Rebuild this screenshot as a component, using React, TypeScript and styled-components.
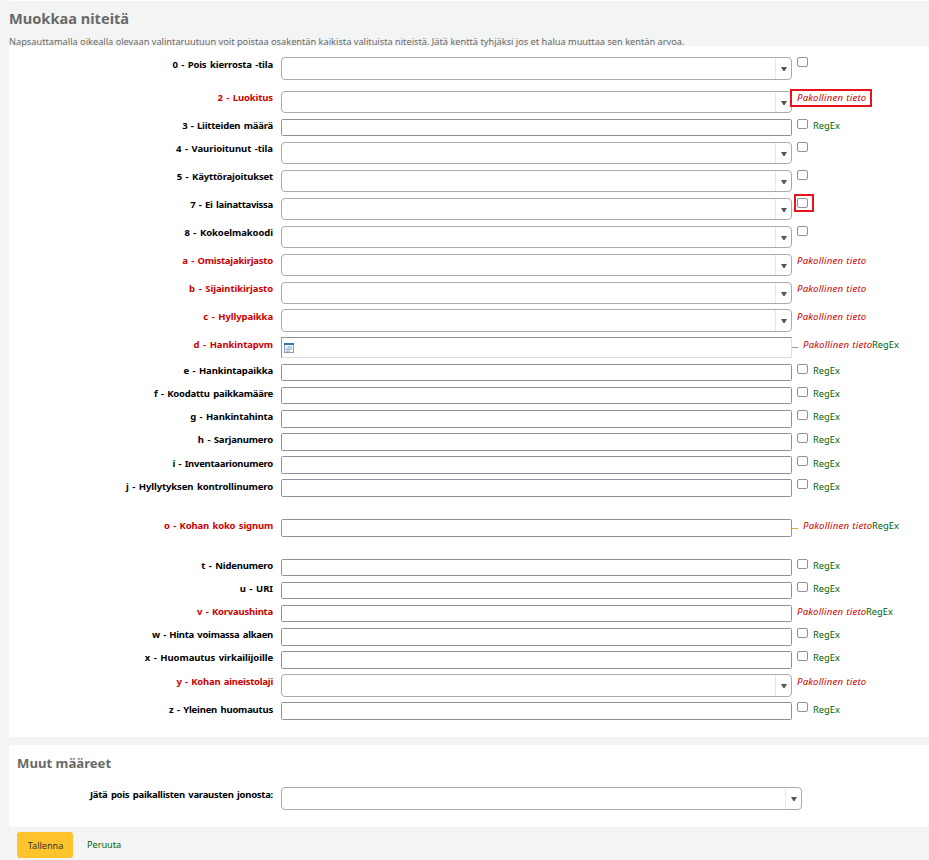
import React from 'react';
import styled, { createGlobalStyle } from 'styled-components';

const GlobalStyle = createGlobalStyle`
  *, *::before, *::after { box-sizing: border-box; }
  body {
    margin: 0;
    background: #f3f4f4;
    color: #000;
    font: 9.3px/12px "Noto Sans", "Open Sans", sans-serif;
  }
`;

const Page = styled.main`
  display: flex;
  flex-direction: column;
  height: 860px;
  padding-left: 9px;
  overflow: hidden;
`;

const TopEdge = styled.div`
  flex: none;
  height: 1px;
  background: #fff;
`;

const Header = styled.header`
  flex: none;
  height: 45px;
  padding-top: 7px;
  color: #696969;
  z-index: 1;
`;

const Title = styled.h1`
  margin: 0;
  font-size: 14.6px;
  line-height: 20px;
  font-weight: 700;
`;

const Intro = styled.p`
  margin: 8px 0 0;
  font-size: 9.22px;
  line-height: 12px;
  white-space: nowrap;
`;

const Panel = styled.section<{ $height: number; $top: number }>`
  flex: none;
  height: ${(p) => p.$height}px;
  padding-top: ${(p) => p.$top}px;
  background: #fff;
`;

const PanelTitle = styled.h2`
  margin: 0 0 14px 8px;
  font-size: 13.15px;
  line-height: 20px;
  font-weight: 700;
  color: #696969;
`;

const Gap = styled.div`
  flex: none;
  height: 8px;
`;

const Row = styled.div<{ $pitch: number }>`
  display: flex;
  align-items: flex-start;
  height: ${(p) => p.$pitch}px;
`;

const Label = styled.label<{ $required?: boolean; $drop: number; $tracking: number }>`
  flex: none;
  width: 264px;
  margin-right: 8px;
  padding-top: ${(p) => p.$drop - 6}px;
  font-size: 9.5px;
  font-weight: 700;
  letter-spacing: ${(p) => p.$tracking}px;
  word-spacing: 1.2px;
  text-align: right;
  white-space: nowrap;
  color: ${(p) => (p.$required ? '#c00' : '#000')};
`;

const TextInput = styled.input<{ $height: number }>`
  flex: none;
  width: 511px;
  height: ${(p) => p.$height}px;
  margin: 0;
  padding: 0 4px;
  border: 1px solid #8f8f9d;
  border-radius: 1.5px;
  background: #fff;
  font: inherit;
  outline: 0;
`;

const SelectBox = styled.div<{ $width: number; $height: number }>`
  flex: none;
  display: flex;
  justify-content: flex-end;
  width: ${(p) => p.$width}px;
  height: ${(p) => p.$height}px;
  border: 1px solid #aaa;
  border-radius: 4px;
  background: #fff;
`;

const SelectArrow = styled.span`
  display: flex;
  align-items: flex-start;
  justify-content: center;
  width: 16px;
  padding-top: 9px;
  border-left: 1px solid #e8e8e8;
`;

const DateBox = styled.div`
  flex: none;
  width: 511px;
  height: 21px;
  padding: 5px 0 0 2px;
  border: 1px solid #ddd;
  border-top-color: #8f8f8f;
  border-left-color: #999;
  background: #fff;
`;

const Tail = styled.div<{ $drop: number }>`
  display: flex;
  flex: none;
  align-items: flex-start;
  margin-left: 5px;
  line-height: 12px;
  padding-top: ${(p) => p.$drop - 6}px;
`;

const Check = styled.input<{ $drop: number }>`
  appearance: none;
  flex: none;
  width: 11px;
  height: 10px;
  margin: ${(p) => 6 - p.$drop}px 5px 0 0;
  border: 1px solid #8f8f9d;
  border-radius: 2px;
  background: #fff;
`;

const Required = styled.span`
  width: 69px;
  flex: none;
  font-size: 9.6px;
  letter-spacing: 0.2px;
  word-spacing: 0.5px;
  font-style: italic;
  white-space: nowrap;
  color: #c00;
`;

const RegEx = styled.span`
  color: #006100;
`;

const Ellipsis = styled.a<{ $gold?: boolean }>`
  width: 6px;
  height: 1px;
  flex: none;
  margin: 8px 5px 0 -5px;
  background: ${(p) => (p.$gold ? '#d4b03a' : '#8aa08a')};
`;

const Highlight = styled.span<{ $wide?: boolean }>`
  position: absolute;
  left: ${(p) => (p.$wide ? -7 : -3)}px;
  top: ${(p) => (p.$wide ? -3 : -5)}px;
  width: ${(p) => (p.$wide ? 82 : 20)}px;
  height: 18px;
  border: 2px solid #e8131b;
  pointer-events: none;
`;

const Marked = styled.span`
  display: flex;
  position: relative;
`;

const Actions = styled.footer`
  display: flex;
  align-items: flex-start;
  padding: 5px 0 0 8px;
`;

const SaveButton = styled.button`
  width: 56px;
  height: 26px;
  padding: 2px 0 0 1px;
  border: 0;
  border-radius: 3px;
  background: #ffc32b;
  color: #333;
  font: inherit;
  font-size: 9.1px;
`;

const CancelLink = styled.a`
  margin: 7px 0 0 14px;
  font-size: 9.15px;
  color: #006100;
`;

type Field = {
  label: string;
  kind: 'select' | 'text' | 'date';
  height: number;
  pitch: number;
  drop: number;
  tracking: number;
  required?: boolean;
  regex?: boolean;
  dots?: boolean;
  marked?: boolean;
};

const fields: Field[] = [
  { label: '0 - Pois kierrosta -tila', kind: 'select', height: 23, pitch: 34, drop: 8, tracking: -0.16 },
  { label: '2 - Luokitus', kind: 'select', height: 22, pitch: 28, drop: 7, tracking: -0.12, required: true, marked: true },
  { label: '3 - Liitteiden määrä', kind: 'text', height: 17, pitch: 23, drop: 7, tracking: -0.23, regex: true },
  { label: '4 - Vaurioitunut -tila', kind: 'select', height: 22, pitch: 28, drop: 7, tracking: -0.07 },
  { label: '5 - Käyttörajoitukset', kind: 'select', height: 22, pitch: 28, drop: 7, tracking: -0.16 },
  { label: '7 - Ei lainattavissa', kind: 'select', height: 22, pitch: 28, drop: 7, tracking: -0.28, marked: true },
  { label: '8 - Kokoelmakoodi', kind: 'select', height: 22, pitch: 28, drop: 7, tracking: -0.08 },
  { label: 'a - Omistajakirjasto', kind: 'select', height: 22, pitch: 28, drop: 7, tracking: -0.22, required: true },
  { label: 'b - Sijaintikirjasto', kind: 'select', height: 22, pitch: 27, drop: 7, tracking: -0.07, required: true },
  { label: 'c - Hyllypaikka', kind: 'select', height: 23, pitch: 28, drop: 8, tracking: -0.09, required: true },
  { label: 'd - Hankintapvm', kind: 'date', height: 21, pitch: 27, drop: 8, tracking: -0.09, required: true, regex: true, dots: true },
  { label: 'e - Hankintapaikka', kind: 'text', height: 17, pitch: 23, drop: 7, tracking: -0.13, regex: true },
  { label: 'f - Koodattu paikkamääre', kind: 'text', height: 17, pitch: 23, drop: 7, tracking: -0.23, regex: true },
  { label: 'g - Hankintahinta', kind: 'text', height: 18, pitch: 23, drop: 7, tracking: -0.14, regex: true },
  { label: 'h - Sarjanumero', kind: 'text', height: 18, pitch: 23, drop: 7, tracking: -0.16, regex: true },
  { label: 'i - Inventaarionumero', kind: 'text', height: 18, pitch: 23, drop: 8, tracking: -0.27, regex: true },
  { label: 'j - Hyllytyksen kontrollinumero', kind: 'text', height: 18, pitch: 40, drop: 8, tracking: -0.12, regex: true },
  { label: 'o - Kohan koko signum', kind: 'text', height: 18, pitch: 40, drop: 7, tracking: -0.18, required: true, regex: true, dots: true },
  { label: 't - Nidenumero', kind: 'text', height: 17, pitch: 23, drop: 7, tracking: -0.17, regex: true },
  { label: 'u - URI', kind: 'text', height: 17, pitch: 23, drop: 7, tracking: -0.06, regex: true },
  { label: 'v - Korvaushinta', kind: 'text', height: 17, pitch: 23, drop: 7, tracking: -0.21, required: true, regex: true },
  { label: 'w - Hinta voimassa alkaen', kind: 'text', height: 18, pitch: 23, drop: 7, tracking: -0.29, regex: true },
  { label: 'x - Huomautus virkailijoille', kind: 'text', height: 18, pitch: 23, drop: 7, tracking: -0.09, regex: true },
  { label: 'y - Kohan aineistolaji', kind: 'select', height: 23, pitch: 28, drop: 8, tracking: -0.25, required: true },
  { label: 'z - Yleinen huomautus', kind: 'text', height: 18, pitch: 18, drop: 8, tracking: -0.22, regex: true },
];

function Select({ width = 511, height }: { width?: number; height: number }) {
  return (
    <SelectBox $width={width} $height={height}>
      <SelectArrow>
        <svg width="6" height="4" viewBox="0 0 6 4">
          <path d="M0 0h6L3.6 4H2.4z" fill="#555" />
        </svg>
      </SelectArrow>
    </SelectBox>
  );
}

function CalendarIcon() {
  return (
    <svg width="10" height="10" viewBox="0 0 10 10" display="block">
      <rect x=".5" y=".5" width="9" height="9" fill="#f4f8fb" stroke="#7f9fbd" />
      <path d="M0 0h10v2H0z" fill="#3a74ad" />
      <path d="M3.500 4H8M2 6H8M2 8H6" stroke="#7595b8" strokeWidth=".9" />
    </svg>
  );
}

function FieldRow({ field }: { field: Field }) {
  const { kind, height, drop, required, regex, dots, marked } = field;
  const status = required ? <Required>Pakollinen tieto</Required> : <Check type="checkbox" $drop={drop} />;
  return (
    <Row $pitch={field.pitch}>
      <Label $required={required} $drop={drop} $tracking={field.tracking}>{field.label}</Label>
      {kind === 'select' && <Select height={height} />}
      {kind === 'text' && <TextInput $height={height} />}
      {kind === 'date' && <DateBox><CalendarIcon /></DateBox>}
      <Tail $drop={drop}>
        {dots && <Ellipsis $gold={kind === 'text'} />}
        {marked ? <Marked>{status}<Highlight $wide={required} /></Marked> : status}
        {regex && <RegEx>RegEx</RegEx>}
      </Tail>
    </Row>
  );
}

export default function App() {
  return (
    <>
      <GlobalStyle />
      <Page>
        <TopEdge />
        <Header>
          <Title>Muokkaa niteitä</Title>
          <Intro>
            Napsauttamalla oikealla olevaan valintaruutuun voit poistaa osakentän kaikista valituista niteistä. Jätä
            kenttä tyhjäksi jos et halua muuttaa sen kentän arvoa.
          </Intro>
        </Header>
        <Panel $height={691} $top={11}>
          {fields.map((field) => <FieldRow key={field.label} field={field} />)}
        </Panel>
        <Gap />
        <Panel $height={82} $top={8}>
          <PanelTitle>Muut määreet</PanelTitle>
          <Row $pitch={23}>
            <Label $drop={8} $tracking={-0.27}>Jätä pois paikallisten varausten jonosta:</Label>
            <Select width={521} height={23} />
          </Row>
        </Panel>
        <Actions>
          <SaveButton>Tallenna</SaveButton>
          <CancelLink>Peruuta</CancelLink>
        </Actions>
      </Page>
    </>
  );
}
